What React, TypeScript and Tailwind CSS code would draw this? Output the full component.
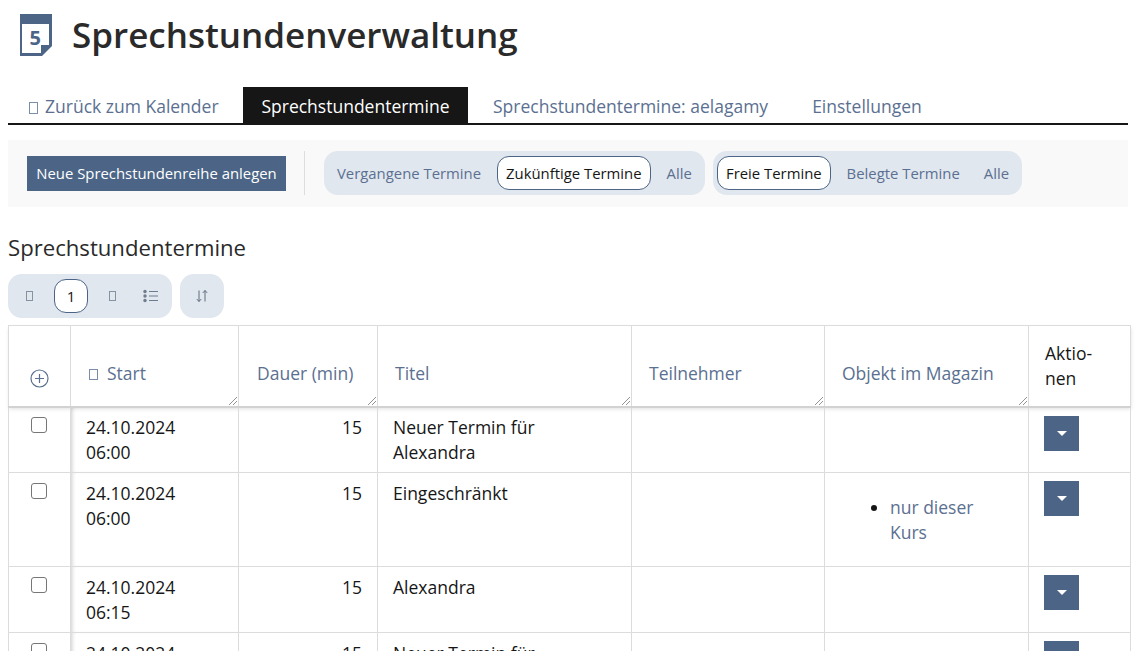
const tofu = 'inline-block border border-current opacity-80'

function Tofu({ className = 'w-[8px] h-[11px]' }: { className?: string }) {
  return <span className={`${tofu} ${className}`} />
}

function Resize() {
  return (
    <svg className="absolute right-0 bottom-0" width="11" height="11" viewBox="0 0 11 11" fill="none" stroke="#777" strokeWidth="0.8">
      <path d="M2 10 10 2M6 10l4-4" />
    </svg>
  )
}

function Caret() {
  return (
    <button className="w-[35px] h-[35px] bg-[#4c6586] flex items-center justify-center">
      <svg width="10" height="5" viewBox="0 0 10 5"><path d="M0 0h10L5 5z" fill="#fff" /></svg>
    </button>
  )
}

function Pill({ label, active }: { label: string; active?: boolean }) {
  return (
    <span className={active ? 'h-[34px] px-2 flex items-center rounded-[12px] border border-[#4c6586] bg-white text-[#161616]' : 'h-[34px] px-2 flex items-center text-[#5b7091]'}>
      {label}
    </span>
  )
}

const headers = [
  { label: 'Dauer (min)' },
  { label: 'Titel' },
  { label: 'Teilnehmer' },
  { label: 'Objekt im Magazin' },
]

const rows = [
  { date: '24.10.2024', time: '06:00', title: 'Neuer Termin für Alexandra', h: 'h-[66px]' },
  { date: '24.10.2024', time: '06:00', title: 'Eingeschränkt', h: 'h-[94px]', obj: 'nur dieser Kurs' },
  { date: '24.10.2024', time: '06:15', title: 'Alexandra', h: 'h-[66px]' },
  { date: '24.10.2024', time: '06:15', title: 'Neuer Termin für Alexandra', h: 'h-[66px]' },
]

export default function App() {
  return (
    <div className="h-[651px] overflow-hidden bg-white font-['Open_Sans',sans-serif] text-[#161616]">
      <div className="px-2">
        <div className="h-[87px] pt-[14px] pl-[12px] flex items-start">
          <svg width="32" height="42" viewBox="0 0 32 42">
            <path d="M0 0h32v32L22 42H0z" fill="#4c6586" />
            <path d="M2 10h27v21h-8v8H2z" fill="#fff" />
            <text x="9.5" y="31" fontSize="20" fontWeight="700" fill="#4c6586" fontFamily="Open Sans">5</text>
          </svg>
          <h1 className="ml-[20px] -mt-[1px] text-[35px] leading-[44px] font-semibold text-[#2a2a2a]">Sprechstundenverwaltung</h1>
        </div>

        <div className="flex h-[38px] pt-[2px] border-b-2 border-[#161616] text-[17.5px]">
          <span className="w-[235px] pl-[21px] flex items-center gap-[7px] text-[#5b7091]">
            <Tofu className="w-[9px] h-[12px] mt-[3px]" /> Zurück zum Kalender
          </span>
          <span className="w-[225px] -mt-[2px] pt-[2px] flex items-center justify-center bg-[#161616] text-white">Sprechstundentermine</span>
          <span className="ml-[25px] flex items-center text-[#5b7091]">Sprechstundentermine: aelagamy</span>
          <span className="ml-[44px] flex items-center text-[#5b7091]">Einstellungen</span>
        </div>

        <div className="mt-[15px] h-[67px] pb-[1px] bg-[#f9f9f9] flex items-center pl-[19px] text-[14.875px]">
          <button className="mt-[1px] h-[35px] w-[259px] bg-[#4c6586] text-white text-[14.875px] font-medium">Neue Sprechstundenreihe anlegen</button>
          <div className="ml-[18px] mr-[19px] w-px h-[44px] bg-[#dddddd]" />
          <div className="h-[44px] w-[381px] pl-[5px] rounded-[14px] bg-[#e1e7ef] flex items-center gap-[8px]">
            <Pill label="Vergangene Termine" />
            <Pill label="Zukünftige Termine" active />
            <Pill label="Alle" />
          </div>
          <div className="ml-[8px] h-[44px] w-[309px] pl-[4px] rounded-[14px] bg-[#e1e7ef] flex items-center gap-[8px]">
            <Pill label="Freie Termine" active />
            <Pill label="Belegte Termine" />
            <Pill label="Alle" />
          </div>
        </div>

        <h2 className="mt-[24px] text-[22.15px] leading-[32px] text-[#2a2a2a]">Sprechstundentermine</h2>

        <div className="mt-[11px] flex gap-[8px] text-[15px]">
          <div className="w-[164px] h-[44px] rounded-[14px] bg-[#e1e7ef] flex items-center text-[#6f7c8f]">
            <Tofu className="ml-[18px] w-[7px] h-[10px]" />
            <span className="ml-[21px] w-[34px] h-[34px] rounded-[12px] border border-[#4c6586] bg-white text-[#161616] flex items-center justify-center">1</span>
            <Tofu className="ml-[21px] w-[7px] h-[10px]" />
            <svg className="ml-[27px]" width="15" height="14" viewBox="0 0 15 13" fill="currentColor">
              <circle cx="2" cy="2" r="1.7" /><circle cx="2" cy="6.5" r="1.7" /><circle cx="2" cy="11" r="1.7" />
              <path d="M6 1.5h9v1H6zM6 6h9v1H6zM6 10.5h9v1H6z" />
            </svg>
          </div>
          <div className="w-[44px] h-[44px] rounded-[14px] bg-[#e1e7ef] flex items-center justify-center text-[#5f6b7d]">
            <svg width="12" height="14" viewBox="0 0 12 13" fill="none" stroke="currentColor" strokeWidth="1">
              <path d="M3 1v11M.8 9.6 3 12l2.2-2.4M9 12V1M6.8 3.4 9 1l2.2 2.4" />
            </svg>
          </div>
        </div>

        <table className="mt-[7px] w-[1122px] table-fixed border-collapse text-[17.5px] leading-[25px]">
          <colgroup>
            <col className="w-[62px]" />
            <col className="w-[168px]" />
            <col className="w-[139px]" />
            <col className="w-[254px]" />
            <col className="w-[193px]" />
            <col className="w-[204px]" />
            <col className="w-[102px]" />
          </colgroup>
          <thead>
            <tr className="h-[81px] border-b-2 border-[#d2d2d2] text-left font-normal shadow-[0_2px_4px_rgba(0,0,0,0.12)]">
              <th className="border border-[#dcdcdc] font-normal align-bottom pb-[18px] pl-[21px]">
                <svg width="19" height="19" viewBox="0 0 19 19" fill="none" stroke="#5b7091" strokeWidth="1.2">
                  <circle cx="9.5" cy="9.5" r="8.5" /><path d="M9.5 5v9M5 9.5h9" />
                </svg>
              </th>
              <th className="relative border border-[#dcdcdc] font-normal pl-[18px] pt-[16px] text-[#5b7091]">
                <Tofu className="w-[9px] h-[11px] mr-[9px]" />Start<Resize />
              </th>
              {headers.map((h, i) => (
                <th key={h.label} className={`relative border border-[#dcdcdc] font-normal pt-[16px] text-[#5b7091] ${i === 0 ? 'pl-[18px]' : 'pl-[17px]'}`}>
                  {h.label}<Resize />
                </th>
              ))}
              <th className="border border-[#dcdcdc] font-normal pl-[16px] pt-[1px] text-left">Aktio-<br />nen</th>
            </tr>
          </thead>
          <tbody>
            {rows.map((r, i) => {
              const textTop = i === 0 ? 'pt-[7px]' : 'pt-[8px]'
              return (
                <tr key={i} className={`${r.h} border-b border-[#dcdcdc]`}>
                  <td className={`border border-[#dcdcdc] align-top pl-[22px] ${i === 0 ? 'pt-[9px]' : 'pt-[10px]'}`}>
                    <span className="block w-[16px] h-[16px] rounded-[3px] border border-[#767676] bg-white" />
                  </td>
                  <td className={`border border-[#dcdcdc] align-top pl-[15px] ${textTop} shadow-[inset_4px_0_4px_-3px_rgba(0,0,0,0.2)]`}>{r.date}<br />{r.time}</td>
                  <td className={`border border-[#dcdcdc] align-top pr-[15px] ${textTop} text-right`}>15</td>
                  <td className={`border border-[#dcdcdc] align-top pl-[15px] pr-[60px] ${textTop}`}>{r.title}</td>
                  <td className="border border-[#dcdcdc]" />
                  <td className="border border-[#dcdcdc] align-top pt-[22px]">
                    {r.obj && (
                      <ul className="list-disc pl-[65px] pr-[30px] text-[#5b7091] marker:text-[#161616]">
                        <li>{r.obj}</li>
                      </ul>
                    )}
                  </td>
                  <td className={`border border-[#dcdcdc] align-top pl-[15px] ${i === 0 ? 'pt-[8px]' : 'pt-[8px]'}`}><Caret /></td>
                </tr>
              )
            })}
          </tbody>
        </table>
      </div>
    </div>
  )
}
